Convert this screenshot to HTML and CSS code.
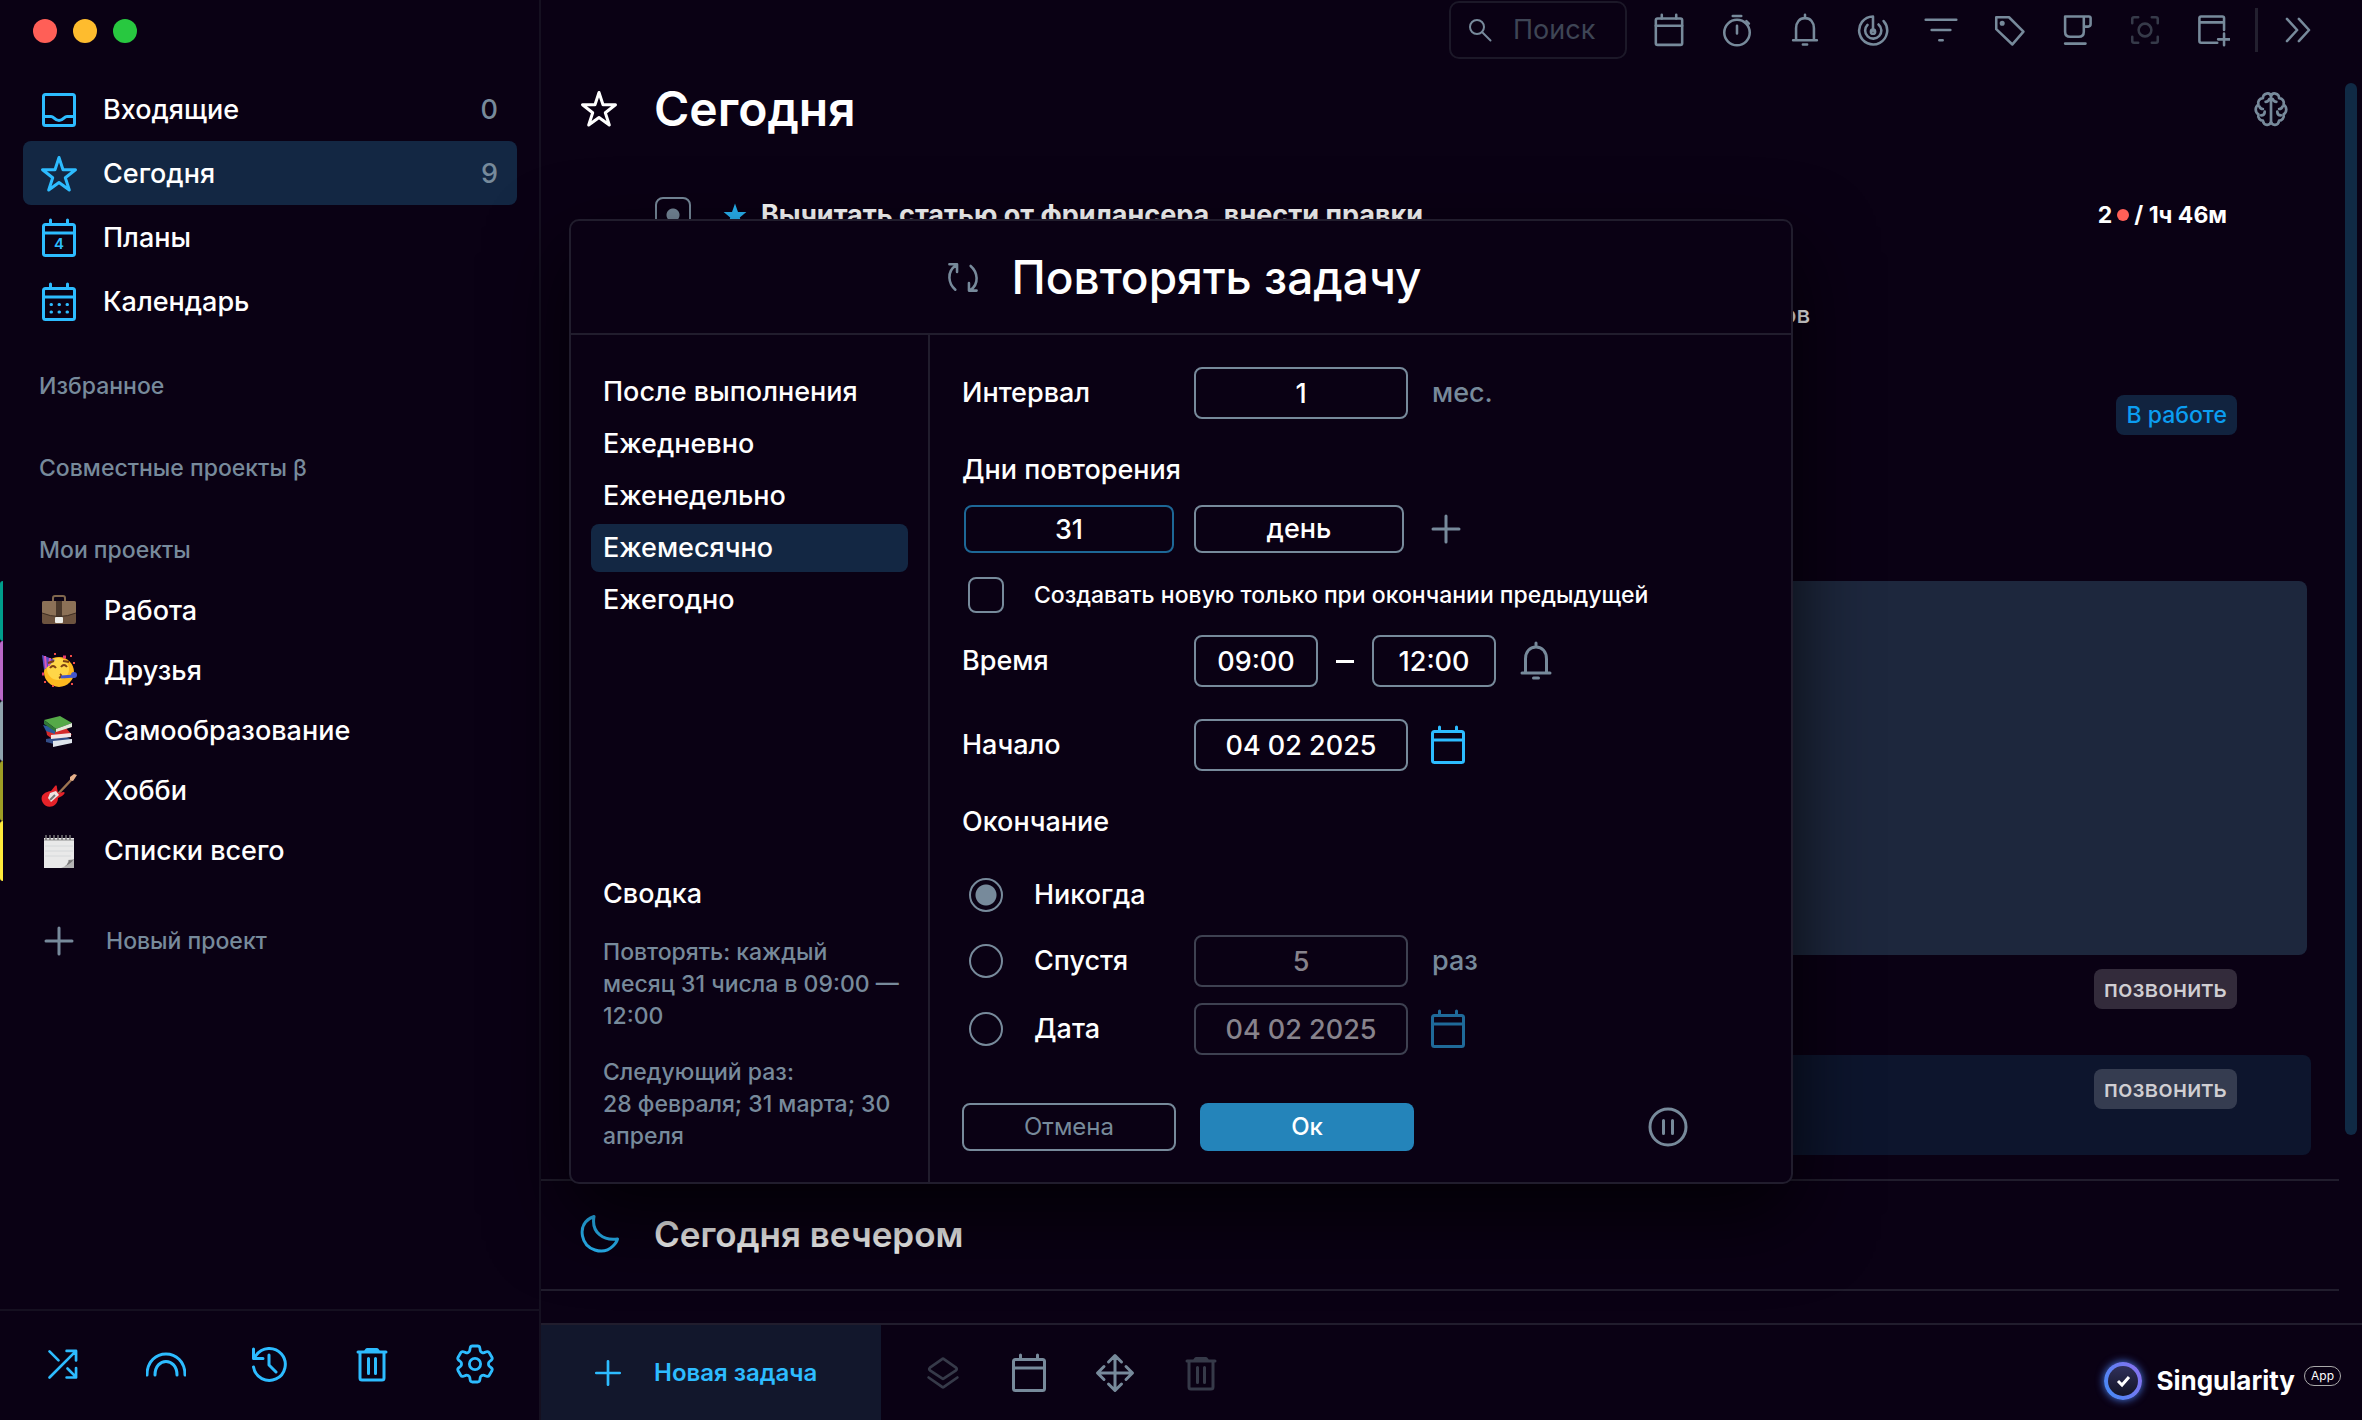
FILE: index.html
```html
<!DOCTYPE html>
<html lang="ru">
<head>
  <meta charset="UTF-8">
  <title>Сегодня | Singularity App</title>
  <link rel="stylesheet" href="styles.css">
</head>
<body>
  <!-- icon sprite -->
  <svg class="sprite" aria-hidden="true">
    <symbol id="i-inbox" viewBox="0 0 40 40"><rect x="4.500" y="4.500" width="31" height="31" rx="2"/><path d="M4.500 26.500h7.500c3 0 3.500 4 8 4s5-4 8-4h7.500"/></symbol>
    <symbol id="i-star" viewBox="0 0 40 40"><path d="M20 3.500l4 12.300h12.500l-10.200 8 4 12.200L20 28.500 9.700 36l4-12.200-10.200-8H16z"/></symbol>
    <symbol id="i-cal" viewBox="0 0 40 40"><rect x="4.500" y="6.500" width="31" height="31" rx="2"/><path d="M4.500 15h31M11.500 2v4.500M28.500 2v4.500"/></symbol>
    <symbol id="i-month" viewBox="0 0 40 40"><rect x="4.500" y="6.500" width="31" height="31" rx="2"/><path d="M4.500 15h31M11.500 2v4.500M28.500 2v4.500M12 22.500h.5M20 22.500h.5M28 22.500h.5M12 30h.5M20 30h.5M28 30h.5"/></symbol>
    <symbol id="i-plus" viewBox="0 0 40 40"><path d="M20 7v26M7 20h26"/></symbol>
    <symbol id="i-shuffle" viewBox="0 0 40 40"><path d="M5 6l10 10M5 35L34 6M24 5.500h10.500V16M24 35h10.500V24.500M25 25l9 9"/></symbol>
    <symbol id="i-rainbow" viewBox="0 0 40 40"><path d="M1 31C1 3 39 3 39 31M9 31c0-18 22-18 22 0"/></symbol>
    <symbol id="i-history" viewBox="0 0 40 40"><path d="M4.500 23A16 16 0 1 0 7 11.500L4.500 14M4.500 5v9.500H14M20 11v10l7 7"/></symbol>
    <symbol id="i-trash" viewBox="0 0 40 40"><path d="M6 8h28M13 8l2-2.500h10L27 8M8 8v26q0 2 2 2h20q2 0 2-2V8M16.500 14.500v15M23.500 14.500v15"/></symbol>
    <symbol id="i-gear" viewBox="2 2 20 20"><path stroke-width="1.400" d="M9.594 3.940c.09-.542.56-.94 1.110-.94h2.593c.55 0 1.020.398 1.110.94l.213 1.281c.063.374.313.686.645.87.074.04.147.083.22.127.325.196.72.257 1.075.124l1.217-.456a1.125 1.125 0 0 1 1.370.49l1.296 2.247a1.125 1.125 0 0 1-.26 1.431l-1.003.827c-.293.241-.438.613-.43.992a7.723 7.723 0 0 1 0 .255c-.008.378.137.75.43.991l1.004.827c.424.35.534.955.26 1.430l-1.298 2.247a1.125 1.125 0 0 1-1.369.491l-1.217-.456c-.355-.133-.75-.072-1.076.124a6.470 6.470 0 0 1-.22.128c-.331.183-.581.495-.644.869l-.213 1.281c-.09.543-.56.94-1.110.94h-2.594c-.55 0-1.019-.398-1.110-.94l-.213-1.281c-.062-.374-.312-.686-.644-.87a6.520 6.520 0 0 1-.22-.127c-.325-.196-.72-.257-1.076-.124l-1.217.456a1.125 1.125 0 0 1-1.369-.49l-1.297-2.247a1.125 1.125 0 0 1 .26-1.431l1.004-.827c.292-.24.437-.613.43-.991a6.932 6.932 0 0 1 0-.255c.007-.38-.138-.751-.43-.992l-1.004-.827a1.125 1.125 0 0 1-.26-1.430l1.297-2.247a1.125 1.125 0 0 1 1.370-.491l1.216.456c.356.133.751.072 1.076-.124.072-.044.146-.086.22-.128.332-.183.582-.495.644-.869z"/><circle cx="12" cy="12" r="2.800" stroke-width="1.400"/></symbol>
    <symbol id="i-search" viewBox="0 0 24 24"><circle cx="9" cy="9" r="7"/><path d="M14 14l8.500 8.500"/></symbol>
    <symbol id="i-timer" viewBox="0 0 40 40"><circle cx="20" cy="23" r="15"/><path d="M20 15v9M15 3.500h10M31 9.500l3 3"/></symbol>
    <symbol id="i-bell" viewBox="0 0 40 40"><path d="M6 32h28M9.500 32V18c0-7 4-12 10.500-12s10.500 5 10.500 12v14M20 2v4M17.500 37h5"/></symbol>
    <symbol id="i-radar" viewBox="0 0 40 40"><path d="M20 21V4a16.500 16.500 0 1 0 12.500 5.500M13.500 14a9.500 9.500 0 1 0 13-.5"/><circle cx="20" cy="22" r="2.500"/></symbol>
    <symbol id="i-filter" viewBox="0 0 40 40"><path d="M2 8h36M9 20h22M18 32h4"/></symbol>
    <symbol id="i-tag" viewBox="0 0 40 40"><path d="M5 5h15L37 22 24 37 5 19z"/><circle cx="12" cy="12" r="1.500"/></symbol>
    <symbol id="i-cup" viewBox="0 0 40 40"><path d="M6 4h28q2 0 2 2v7q0 3-3 3h-5M28 4v18q0 6-6 6H12q-6 0-6-6V4M6 36h24"/></symbol>
    <symbol id="i-focus" viewBox="0 0 40 40"><circle cx="20" cy="20" r="7.500"/><path d="M5 12V7q0-2 2-2h5M28 5h5q2 0 2 2v5M35 28v5q0 2-2 2h-5M12 35H7q-2 0-2-2v-5"/></symbol>
    <symbol id="i-window" viewBox="0 0 40 40"><path d="M25 35H6q-2 0-2-2V6q0-2 2-2h25q2 0 2 2v14M4 11h29M33 24v14M26 31h14"/></symbol>
    <symbol id="i-more" viewBox="0 0 40 40"><path d="M7 7l12 13L7 33M21 7l12 13-12 13"/></symbol>
    <symbol id="i-brain" viewBox="0 0 40 40"><path d="M20 6c-1-5-9-4-9 2-4 0-6 4-5 7-4 3-4 8 0 11-1 4 2 7 5 7 1 6 8 6 9 1zM20 6c1-5 9-4 9 2 4 0 6 4 5 7 4 3 4 8 0 11 1 4-2 7-5 7-1 6-8 6-9 1M7 17q1 3 4 3M9 27q4 0 4-4M33 17q-1 3-4 3M31 27q-4 0-4-4M14 12q3 0 4-3M26 12q-3 0-4-3"/></symbol>
    <symbol id="i-repeat" viewBox="0 0 40 40"><path d="M4 5h9v9M12 6c-12 8-9 22-1 29M36 36h-9v-9M28 36c12-8 9-22 1-29"/></symbol>
    <symbol id="i-moon" viewBox="0 0 40 40"><path d="M14 2.500C4 6 1 14 2.500 22 5 36 23 42 33 32c2-2 4-4 4.500-7C24 27 11 19 14 2.500z"/></symbol>
    <symbol id="i-layers" viewBox="0 0 40 40"><path d="M19 4.500q1-1 2 0L34.500 14q1.500 1.500 0 3L21 26q-1 1-2 0L5.500 17q-1.500-1.500 0-3zM4 25l15 10.500q1 .8 2 0L36 25"/></symbol>
    <symbol id="i-move" viewBox="0 0 40 40"><path d="M20 3v34M3 20h34M13.500 9L20 2.500 26.500 9M13.500 31l6.500 6.500 6.500-6.500M9 13.500L2.500 20 9 26.500M31 13.500l6.500 6.500-6.500 6.500"/></symbol>
    <symbol id="i-pause" viewBox="0 0 40 40"><circle cx="20" cy="20" r="18"/><path d="M15.500 13.500v13M24.500 13.500v13"/></symbol>
  </svg>

  <div class="app">
    <aside class="sidebar">
      <div class="lights">
        <span class="light red"></span>
        <span class="light yellow"></span>
        <span class="light green"></span>
      </div>

      <nav class="nav">
        <a href="#inbox"><svg class="icon"><use href="#i-inbox"/></svg>Входящие<span class="count">0</span></a>
        <a href="#today" class="active"><svg class="icon"><use href="#i-star"/></svg>Сегодня<span class="count">9</span></a>
        <a href="#plans"><svg class="icon" viewBox="0 0 40 40"><use href="#i-cal"/><text class="cal-num" x="20" y="31" text-anchor="middle">4</text></svg>Планы</a>
        <a href="#calendar"><svg class="icon"><use href="#i-month"/></svg>Календарь</a>
      </nav>

      <div class="groups">
        <h4>Избранное</h4>
        <h4>Совместные проекты β</h4>
        <h4>Мои проекты</h4>
      </div>

      <div class="projects">
        <a href="#work" class="teal">
          <svg class="emoji" viewBox="0 0 36 36"><path d="M12 8V5q0-2 2-2h8q2 0 2 2v3" fill="none" stroke="#80674d" stroke-width="2"/><rect x="1" y="8" width="34" height="23" rx="2" fill="#6d533f"/><path d="M1 10q0-2 2-2h30q2 0 2 2v10q-17 7-34 0z" fill="#8c7157"/><path d="M15 8h6v16h-6z" fill="#4b392c"/><path d="M1 20q17 7 34 0" fill="none" stroke="#3e2d22"/><rect x="14" y="24" width="8" height="6" rx="1" fill="#eeeeea"/></svg>
          Работа
        </a>
        <a href="#friends" class="purple">
          <svg class="emoji" viewBox="0 0 36 36"><circle cx="18" cy="19" r="15" fill="#fdb91f"/><circle cx="17" cy="16" r="11" fill="#ffd648"/><path d="M1 2l13 5L3 17z" fill="#5b4bc4"/><path d="M4 3l1 12M9 5l-1 8" stroke="#dd57b4" stroke-width="2"/><path d="M9 15q3-4 6 0M20 14q3-4 6 0M7 10l6-2M22 8l6 1M18 25q4-2 1-4" fill="none" stroke="#7d4013" stroke-width="2"/><path d="M20 24l14-1" stroke="#4356cb" stroke-width="3"/><circle cx="33" cy="22" r="3" fill="#4356cb"/><path d="M13 1h2M29 3h2M32 10h2M3 29h2M11 33h2M30 31h2" stroke="#ee4a47" stroke-width="2"/><path d="M22 4h3M1 21h2" stroke="#e53b6d" stroke-width="3"/></svg>
          Друзья
        </a>
        <a href="#study" class="grey">
          <svg class="emoji" viewBox="0 0 36 36"><path d="M5 26l19-3 7 4-18 4-8-2z" fill="#324c87"/><path d="M12 28l19-2v4l-19 4z" fill="#dfe5ec"/><path d="M5 17l20-2 6 7-21 3-4-3z" fill="#d52a2b"/><path d="M10 22l20-2v4l-20 2z" fill="#f4e4e4"/><path d="M2 12l3 6 9 3v-6z" fill="#2b5b9c"/><path d="M3 7L19 3l12 7-16 6z" fill="#55a948"/><path d="M15 16l16-6v4l-16 5z" fill="#e1ead9"/><path d="M3 7l12 9v3L3 11z" fill="#2f7837"/></svg>
          Самообразование
        </a>
        <a href="#hobby" class="olive">
          <svg class="emoji" viewBox="0 0 36 36"><path d="M16 22L33 4" stroke="#9c7450" stroke-width="2.500"/><path d="M29 4l4-3 3 1-4 6-3-1z" fill="#e7b18b"/><path d="M14 13q2-2 2 2l1 5 6-1q2 1-2 4l-4 2c0 10-12 11-15 5-4-7 1-11 8-12z" fill="#e52229"/><path d="M9 20l6-2 3 4-8 7-3-4z" fill="#eee5e2"/><path d="M9 27l5-5" stroke="#777" stroke-width="2"/></svg>
          Хобби
        </a>
        <a href="#lists" class="lemon">
          <svg class="emoji" viewBox="0 0 36 36"><path d="M3 5h30v30H3z" fill="#e9e9e9"/><path d="M3 7h30" stroke="#bbb" stroke-width="2"/><path d="M5 2v5M9 2v5M13 2v5M17 2v5M21 2v5M25 2v5M29 2v5" stroke="#777" stroke-width="1.500"/><path d="M4 13h28M4 18h28M4 23h26" stroke="#d5d8da"/><path d="M20 35q8-3 7-8l6-1v9z" fill="#b5b5b5"/><path d="M20 35q8-3 8-8 3 1 5-1-4 6-13 9z" fill="#777"/></svg>
          Списки всего
        </a>
      </div>

      <button type="button" class="new-project"><svg class="icon"><use href="#i-plus"/></svg>Новый проект</button>

      <div class="sidebar-footer">
        <button type="button" aria-label="Перемешать"><svg class="icon s36"><use href="#i-shuffle"/></svg></button>
        <button type="button" aria-label="Фокус"><svg class="icon"><use href="#i-rainbow"/></svg></button>
        <button type="button" aria-label="История"><svg class="icon"><use href="#i-history"/></svg></button>
        <button type="button" aria-label="Корзина"><svg class="icon"><use href="#i-trash"/></svg></button>
        <button type="button" aria-label="Настройки"><svg class="icon"><use href="#i-gear"/></svg></button>
      </div>
    </aside>

    <main class="main">
      <header class="topbar">
        <label class="search"><svg class="icon s24"><use href="#i-search"/></svg><input type="text" placeholder="Поиск" aria-label="Поиск"></label>
        <button type="button" aria-label="Календарь"><svg class="icon"><use href="#i-cal"/></svg></button>
        <button type="button" aria-label="Таймер"><svg class="icon"><use href="#i-timer"/></svg></button>
        <button type="button" aria-label="Уведомления"><svg class="icon"><use href="#i-bell"/></svg></button>
        <button type="button" aria-label="Привычки"><svg class="icon"><use href="#i-radar"/></svg></button>
        <button type="button" aria-label="Фильтр"><svg class="icon"><use href="#i-filter"/></svg></button>
        <button type="button" aria-label="Теги"><svg class="icon"><use href="#i-tag"/></svg></button>
        <button type="button" aria-label="Перерыв"><svg class="icon"><use href="#i-cup"/></svg></button>
        <button type="button" class="dim" aria-label="Фокус"><svg class="icon"><use href="#i-focus"/></svg></button>
        <button type="button" aria-label="Новое окно"><svg class="icon"><use href="#i-window"/></svg></button>
        <span class="divider"></span>
        <button type="button" aria-label="Ещё"><svg class="icon"><use href="#i-more"/></svg></button>
      </header>

      <div class="content">
        <div class="page">
          <div class="page-head">
            <svg class="icon"><use href="#i-star"/></svg>
            <h1>Сегодня</h1>
            <button type="button" aria-label="Режим"><svg class="icon s36"><use href="#i-brain"/></svg></button>
          </div>

          <div class="task">
            <span class="task-box"></span>
            <svg class="task-star" viewBox="0 0 40 40"><path d="M20 1l5 14h14L28 24l4 14-12-8-12 8 4-14L1 15h14z"/></svg>
            <b>Вычитать статью от фрилансера, внести правки</b>
            <span class="spent">2 <i></i> / 1ч 46м</span>
          </div>
          <div class="task"><span class="task-note">ов</span></div>
          <div class="task"><span class="chip blue">В работе</span></div>
          <div class="task"></div>
          <div class="preview"></div>
          <div class="task"><span class="chip">позвонить</span></div>
          <div class="task selected"><span class="chip">позвонить</span></div>

          <div class="evening">
            <svg class="icon"><use href="#i-moon"/></svg>
            <h2>Сегодня вечером</h2>
          </div>
        </div>
        <div class="scrollbar"></div>
      </div>

      <footer class="bottombar">
        <button type="button" class="new-task"><svg class="icon s36"><use href="#i-plus"/></svg>Новая задача</button>
        <div class="tools">
          <button type="button" class="dim" aria-label="Слои"><svg class="icon s36"><use href="#i-layers"/></svg></button>
          <button type="button" aria-label="Дата"><svg class="icon"><use href="#i-cal"/></svg></button>
          <button type="button" aria-label="Переместить"><svg class="icon"><use href="#i-move"/></svg></button>
          <button type="button" class="dim" aria-label="Удалить"><svg class="icon"><use href="#i-trash"/></svg></button>
        </div>
        <div class="brand">
          <span class="brand-logo"><svg viewBox="0 0 30 30"><path d="M10 15l4 4 7-8"/></svg></span>
          <b>Singularity</b>
          <span class="brand-app">App</span>
        </div>
      </footer>
    </main>
  </div>

  <div class="dialog" role="dialog" aria-labelledby="dialogTitle">
    <div class="dialog-head">
      <svg class="icon s34"><use href="#i-repeat"/></svg>
      <h2 id="dialogTitle">Повторять задачу</h2>
    </div>
    <div class="dialog-body">
      <div class="modes">
        <button type="button">После выполнения</button>
        <button type="button">Ежедневно</button>
        <button type="button">Еженедельно</button>
        <button type="button" class="active">Ежемесячно</button>
        <button type="button">Ежегодно</button>

        <div class="summary">
          <h3>Сводка</h3>
          <p>Повторять: каждый месяц 31 числа в 09:00 — 12:00</p>
          <p>Следующий раз:<br>28 февраля; 31 марта; 30 апреля</p>
        </div>
      </div>

      <form class="repeat">
        <div class="row interval">
          <label for="interval">Интервал</label>
          <input type="text" id="interval" value="1">
          <span class="unit">мес.</span>
        </div>

        <label class="title" for="day">Дни повторения</label>
        <div class="row days">
          <input type="text" id="day" class="focused" value="31">
          <select aria-label="Тип дня"><option>день</option></select>
          <button type="button" aria-label="Добавить"><svg class="icon"><use href="#i-plus"/></svg></button>
        </div>

        <div class="row check">
          <input type="checkbox" id="onlyNew">
          <label for="onlyNew">Создавать новую только при окончании предыдущей</label>
        </div>

        <div class="row time">
          <label for="from">Время</label>
          <input type="text" id="from" value="09:00">
          <span class="dash"></span>
          <input type="text" aria-label="До" value="12:00">
          <button type="button" aria-label="Напоминание"><svg class="icon"><use href="#i-bell"/></svg></button>
        </div>

        <div class="row start">
          <label for="start">Начало</label>
          <input type="text" id="start" value="04 02 2025">
          <button type="button" class="cyan" aria-label="Выбрать дату"><svg class="icon"><use href="#i-cal"/></svg></button>
        </div>

        <h3 class="title">Окончание</h3>
        <div class="row end never">
          <input type="radio" name="end" id="never" checked>
          <label for="never">Никогда</label>
        </div>
        <div class="row end after">
          <input type="radio" name="end" id="after">
          <label for="after">Спустя</label>
          <input type="text" value="5" aria-label="Число повторений" disabled>
          <span class="unit">раз</span>
        </div>
        <div class="row end date">
          <input type="radio" name="end" id="date">
          <label for="date">Дата</label>
          <input type="text" value="04 02 2025" aria-label="Дата окончания" disabled>
          <button type="button" class="cyan" aria-label="Выбрать дату окончания" disabled><svg class="icon"><use href="#i-cal"/></svg></button>
        </div>

        <div class="row actions">
          <button type="button" class="btn">Отмена</button>
          <button type="submit" class="btn primary">Ок</button>
          <button type="button" class="pause" aria-label="Пауза"><svg class="icon"><use href="#i-pause"/></svg></button>
        </div>
      </form>
    </div>
  </div>
</body>
</html>
```

FILE: styles.css
```css
:root {
  --bg: #0a0114;
  --line: #211d2d;
  --muted: #778a9b;
  --dim: #363a49;
  --cyan: #2dbcff;
  --active: #132743;
}
* {
  box-sizing: border-box;
}
html, body {
  height: 100%;
  margin: 0;
}
body {
  background-color: var(--bg);
  color: white;
  font-family: Inter, "Noto Sans", sans-serif;
  font-size: 27px;
  font-weight: 500;
  line-height: 32px;
  overflow: hidden;
}
h1, h2, h3, h4, p {
  margin: 0;
  font-weight: 500;
}
a {
  color: white;
  text-decoration: none;
}
button, input, select {
  font: inherit;
  color: inherit;
  margin: 0;
  padding: 0;
  border: none;
  background: none;
}
button {
  display: flex;
  align-items: center;
  justify-content: center;
  cursor: pointer;
}
.sprite {
  position: absolute;
  width: 0;
  height: 0;
}
.icon {
  flex: none;
  width: 40px;
  height: 40px;
  fill: none;
  stroke: currentColor;
  stroke-width: 3;
  stroke-linecap: round;
  stroke-linejoin: round;
}
.icon.s24 {
  width: 24px;
  height: 24px;
  stroke-width: 2;
}
.icon.s34 {
  width: 34px;
  height: 34px;
}
.icon.s36 {
  width: 36px;
  height: 36px;
}
.cal-num {
  fill: currentColor;
  stroke: none;
  font-size: 15px;
  font-weight: 600;
}
.app {
  display: grid;
  grid-template-columns: 541px 1fr;
  height: 100%;
}

/* sidebar */
.sidebar {
  display: flex;
  flex-direction: column;
  border-right: 2px solid #151020;
}
.lights {
  display: flex;
  gap: 16px;
  padding: 19px 33px 34px;
}
.light {
  width: 24px;
  height: 24px;
  border-radius: 50%;
}
.light.red { background-color: #ff5f57; }
.light.yellow { background-color: #febc2e; }
.light.green { background-color: #28c840; }
.nav {
  padding: 0 22px 0 23px;
}
.nav a {
  display: flex;
  align-items: center;
  height: 64px;
  padding: 2px 19px 0 16px;
  border-radius: 8px;
}
.nav .icon {
  margin-right: 24px;
  color: var(--cyan);
}
.nav a.active {
  background-color: var(--active);
}
.count {
  margin-left: auto;
  color: var(--muted);
}
.groups {
  display: flex;
  flex-direction: column;
  gap: 50px;
  padding: 37px 39px 15px;
}
.groups h4 {
  font-size: 23px;
  color: var(--muted);
}
.projects a {
  display: flex;
  align-items: center;
  gap: 27px;
  height: 60px;
  padding-left: 38px;
  border-left: 3px solid;
  border-radius: 3px;
}
.projects .teal { border-color: #009d8b; }
.projects .purple { border-color: #ba68c8; }
.projects .grey { border-color: #90a4ae; }
.projects .olive { border-color: #9e9d24; }
.projects .lemon { border-color: #ffeb3b; }
.emoji {
  width: 36px;
  height: 36px;
}
.new-project {
  align-self: flex-start;
  gap: 27px;
  margin: 40px 39px;
  font-size: 23px;
  color: var(--muted);
}
.sidebar-footer {
  display: flex;
  align-items: center;
  justify-content: space-between;
  height: 111px;
  margin-top: auto;
  padding: 0 44px 4px 43px;
  border-top: 2px solid #151020;
  color: var(--cyan);
}
.sidebar-footer button {
  width: 40px;
}

/* main column */
.main {
  display: flex;
  flex-direction: column;
  min-width: 0;
}
.topbar {
  display: flex;
  align-items: center;
  justify-content: flex-end;
  gap: 36px;
  height: 60px;
  padding-right: 48px;
  color: var(--muted);
}
.topbar > button .icon {
  width: 34px;
  height: 34px;
}
.topbar > button {
  width: 32px;
}
.search {
  display: flex;
  align-items: center;
  gap: 21px;
  width: 178px;
  height: 58px;
  margin-right: -10px;
  padding: 0 20px 0 17px;
  border: 2px solid #1c1828;
  border-radius: 10px;
}
.search input {
  width: 100%;
  font-weight: 400;
}
.search input::placeholder {
  color: #3e4555;
  opacity: 1;
}
.dim {
  color: var(--dim);
}
.divider {
  width: 3px;
  height: 44px;
  margin: 0 -12px 0 -10px;
  background-color: #23202f;
}
.content {
  display: flex;
  flex: 1;
  min-height: 0;
}
.page {
  flex: 1;
  min-width: 0;
}
.page-head {
  display: flex;
  align-items: center;
  height: 98px;
  margin-bottom: 23px;
  padding: 0 50px 0 38px;
}
.page-head h1 {
  margin-left: 35px;
  font-size: 48px;
  font-weight: 600;
  line-height: 60px;
}
.page-head button {
  margin-left: auto;
  color: var(--muted);
}
.task {
  display: flex;
  align-items: flex-start;
  height: 100px;
  margin: 0 28px 0 49px;
  padding: 14px 74px 0 65px;
  border-radius: 8px;
  font-size: 23px;
  line-height: 40px;
}
.task.selected {
  background-color: #0d152d;
}
.task-box {
  width: 36px;
  height: 36px;
  margin: 2px 32px 0 0;
  border: 2px solid var(--muted);
  border-radius: 8px;
  background: radial-gradient(circle, var(--muted) 6px, transparent 7px);
}
.task-star {
  width: 24px;
  height: 40px;
  margin-right: 14px;
  fill: #29b6f6;
}
.task b {
  font-size: 27px;
  font-weight: 700;
}
.spent {
  display: flex;
  align-items: center;
  gap: 5px;
  margin: 0 10px 0 auto;
  font-weight: 700;
}
.spent i {
  width: 12px;
  height: 12px;
  border-radius: 50%;
  background-color: #ff5f57;
}
.task-note {
  margin-left: 1127px;
  font-size: 24px;
}
.chip {
  height: 40px;
  margin-left: auto;
  padding: 0 10px;
  border-radius: 8px;
  background-color: rgba(255, 255, 255, .17);
  color: #d0ced2;
  font-size: 24px;
}
.chip.blue {
  background-color: #11233f;
  color: #0b9df0;
  font-size: 23px;
}
.preview {
  height: 374px;
  margin: 0 32px 0 114px;
  border-radius: 8px;
  background-color: #1d273d;
}
.evening {
  display: flex;
  align-items: center;
  height: 112px;
  margin-top: 24px;
  padding: 0 0 2px 39px;
  border: solid var(--line);
  border-width: 2px 0;
}
.evening .icon {
  color: #29b6f6;
}
.evening h2 {
  margin-left: 34px;
  font-size: 35px;
  font-weight: 600;
}
.scrollbar {
  width: 12px;
  height: 1052px;
  margin: 23px 5px 0 6px;
  border-radius: 6px;
  background-color: #102a45;
}
.bottombar {
  display: flex;
  height: 97px;
  border-top: 2px solid var(--line);
  color: var(--muted);
}
.bottombar .dim {
  color: var(--dim);
}
.new-task {
  justify-content: flex-start;
  gap: 28px;
  width: 340px;
  padding-left: 49px;
  background-color: #12172c;
  color: var(--cyan);
  font-size: 24px;
  font-weight: 600;
}
.tools {
  display: flex;
  align-items: center;
  gap: 46px;
  margin-left: 42px;
}
.tools button {
  width: 40px;
}
.brand {
  display: flex;
  align-items: center;
  margin: 16px 21px 0 auto;
  color: white;
}
.brand b {
  margin-left: 14px;
  font-size: 26px;
  font-weight: 700;
}
.brand-logo {
  display: flex;
  width: 38px;
  height: 38px;
  padding: 4px;
  border-radius: 50%;
  background: linear-gradient(60deg, #3f8cf5, #8e6ff0);
  box-shadow: 0 0 8px #4b7ff0;
}
.brand-logo svg {
  width: 30px;
  height: 30px;
  border-radius: 50%;
  background: linear-gradient(#30305a, #131426);
  fill: none;
  stroke: white;
  stroke-width: 3;
}
.brand-app {
  margin: 0 0 10px 9px;
  padding: 0 6px;
  border: 1px solid #aaa;
  border-radius: 10px;
  font-size: 12px;
  font-weight: 400;
  line-height: 18px;
}

/* repeat dialog */
.dialog {
  position: absolute;
  top: 219px;
  left: 50%;
  width: 1224px;
  transform: translateX(-50%);
  border: 2px solid var(--line);
  border-radius: 10px;
  background-color: var(--bg);
  box-shadow: 0 32px 80px rgba(0, 0, 0, .75);
}
.dialog-head {
  display: flex;
  align-items: center;
  justify-content: center;
  gap: 31px;
  height: 114px;
  padding-left: 6px;
  border-bottom: 2px solid var(--line);
  color: var(--muted);
}
.dialog-head h2 {
  font-size: 46px;
  line-height: 60px;
  color: white;
}
.dialog-body {
  display: flex;
}
.modes {
  display: flex;
  flex-direction: column;
  gap: 4px;
  width: 359px;
  padding: 33px 20px 30px;
  border-right: 2px solid var(--line);
}
.modes button {
  justify-content: flex-start;
  height: 48px;
  padding-left: 12px;
  border-radius: 8px;
}
.modes button.active {
  background-color: var(--active);
}
.summary {
  margin: auto 6px 0 12px;
}
.summary h3 {
  margin-bottom: 26px;
  font-size: 27px;
}
.summary p {
  font-size: 23px;
  color: var(--muted);
}
.summary p + p {
  margin-top: 24px;
}
.repeat {
  flex: 1;
  padding: 32px 103px 31px 32px;
}
.row {
  display: flex;
  align-items: center;
}
.repeat .title {
  display: block;
  margin-top: 35px;
  font-size: 27px;
}
.interval label, .time label, .start label {
  width: 232px;
}
.repeat input[type="text"] {
  width: 214px;
  height: 52px;
  border: 2px solid var(--muted);
  border-radius: 8px;
  text-align: center;
}
.repeat input[type="text"]:disabled {
  border-color: #3e4151;
  color: #87838c;
}
.unit {
  margin-left: 24px;
  color: var(--muted);
}
.row > button {
  color: var(--muted);
}
.row > button.cyan {
  margin-left: 20px;
  color: var(--cyan);
}
.row > button.cyan:disabled {
  color: #1f6a99;
}
.days {
  gap: 20px;
  margin-top: 19px;
  padding-left: 2px;
}
.days button {
  margin-left: 2px;
}
.repeat .days input, .days select {
  width: 210px;
  height: 48px;
  border: 2px solid var(--muted);
  border-radius: 8px;
  text-align: center;
  text-align-last: center;
  appearance: none;
}
.repeat .days input.focused {
  border-color: #1d6796;
}
.check {
  gap: 30px;
  margin-top: 24px;
  padding-left: 6px;
  font-size: 23px;
}
.check label {
  white-space: nowrap;
}
.repeat input[type="checkbox"] {
  width: 36px;
  height: 36px;
  border: 2px solid var(--muted);
  border-radius: 8px;
  appearance: none;
}
.time {
  margin-top: 22px;
}
.repeat .time input {
  width: 124px;
}
.dash {
  width: 18px;
  height: 3px;
  margin: 0 18px;
  background-color: white;
}
.time button {
  margin-left: 20px;
}
.start {
  margin-top: 32px;
}
.end {
  padding-left: 7px;
}
.end label {
  width: 160px;
  margin-left: 31px;
}
.repeat input[type="radio"] {
  width: 34px;
  height: 34px;
  border: 2px solid var(--muted);
  border-radius: 50%;
  appearance: none;
}
.repeat input[type="radio"]:checked {
  background: radial-gradient(circle, var(--muted) 10px, transparent 11px);
}
.never {
  margin-top: 40px;
}
.after {
  margin-top: 23px;
}
.date {
  margin-top: 16px;
}
.actions {
  gap: 24px;
  margin-top: 48px;
}
.row > .btn {
  width: 214px;
  height: 48px;
  border: 2px solid var(--muted);
  border-radius: 8px;
  font-size: 24px;
  font-weight: 400;
}
.row > .btn.primary {
  border: none;
  background-color: #2484ba;
  color: white;
  font-weight: 500;
}
.pause {
  margin-left: auto;
}
```
